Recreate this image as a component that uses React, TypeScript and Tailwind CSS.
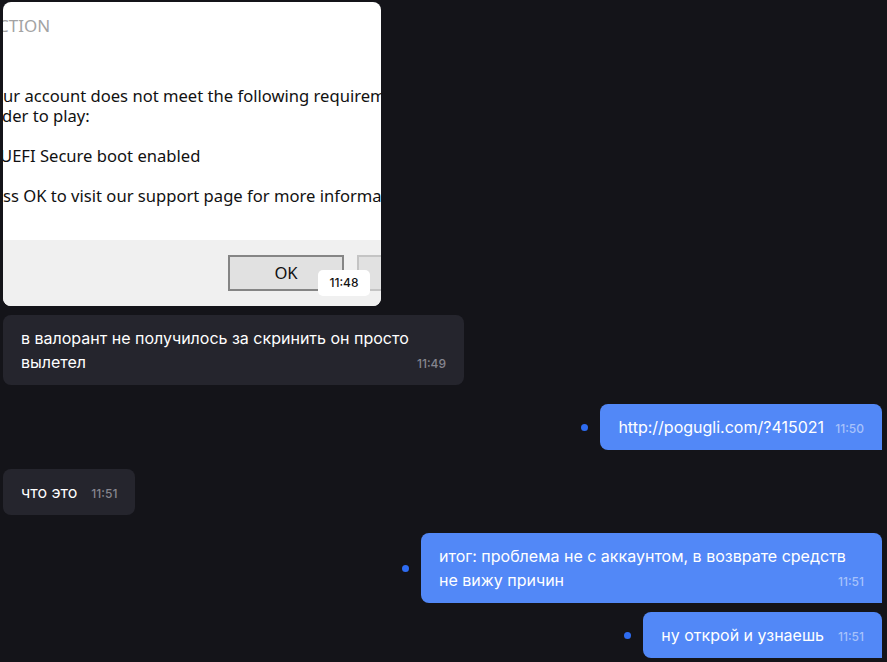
import React from "react";

const SANS = { fontFamily: "Inter, 'Noto Sans', sans-serif" };

function Time({ t, out }: { t: string; out?: boolean }) {
  return (
    <span
      className={
        "absolute bottom-[13px] right-[18px] text-[12px] leading-4 font-medium " +
        (out ? "text-[#a7c2fb]" : "text-[#85858f]")
      }
    >
      {t}
    </span>
  );
}

function Bubble({ text, time, out }: { text: string; time: string; out?: boolean }) {
  return (
    <div
      className={
        "relative max-w-[461px] rounded-[8px] pl-[18px] pr-[18px] pt-[11px] pb-[11px] text-[16px] leading-6 text-white " +
        (out ? "bg-[#5288f7] rounded-br-none" : "bg-[#25252d]")
      }
    >
      {text}
      <span className="inline-block w-[40px]" />
      <Time t={time} out={out} />
    </div>
  );
}

function OutRow({ text, time }: { text: string; time: string }) {
  return (
    <div className="flex items-center justify-end gap-[12px] pr-[5px]">
      <span className="h-[7px] w-[7px] rounded-full bg-[#2e6cf1]" />
      <Bubble text={text} time={time} out />
    </div>
  );
}

function Dialog() {
  const f = { fontFamily: "'Noto Sans', 'Open Sans', sans-serif" };
  return (
    <div className="relative h-[304px] w-[378px] overflow-hidden rounded-[8px] bg-white" style={f}>
      <div className="flex h-[238px] flex-col whitespace-nowrap">
        <div className="ml-[-5px] mt-[12px] text-[17px] leading-6 text-[#a3a3a3]">CTION</div>
        <div className="ml-[0px] mt-[48px] text-[16.6px] leading-[20px] text-[#111]">
          ur account does not meet the following requirements in
        </div>
        <div className="ml-[-1px] text-[16.6px] leading-[20px] text-[#111]">der to play:</div>
        <div className="ml-[-3px] mt-[20px] text-[16.6px] leading-[20px] text-[#111]">UEFI Secure boot enabled</div>
        <div className="ml-[0px] mt-[20px] text-[16.6px] leading-[20px] text-[#111]">
          ss OK to visit our support page for more information.
        </div>
      </div>
      <div className="relative h-[66px] bg-[#f0f0f0]">
        <div className="absolute left-[225px] top-[15px] flex h-[36px] w-[116px] items-center justify-center border-2 border-[#858585] bg-[#e1e1e1] text-[16.6px] text-[#111]">
          OK
        </div>
        <div className="absolute left-[354px] top-[15px] h-[36px] w-[60px] border-2 border-[#c4c4c4] bg-[#e1e1e1]" />
      </div>
      <div
        className="absolute left-[315px] top-[268px] flex h-[26px] w-[52px] items-center justify-center rounded-[5px] bg-white text-[12px] font-medium text-[#111]"
        style={SANS}
      >
        11:48
      </div>
    </div>
  );
}

export default function App() {
  return (
    <div className="h-[662px] w-[887px] overflow-hidden bg-[#141419]" style={SANS}>
      <div className="flex flex-col pt-[2px]">
        <div className="pl-[3px]">
          <Dialog />
        </div>
        <div className="mt-[9px] flex pl-[3px]">
          <Bubble text="в валорант не получилось за скринить он просто вылетел" time="11:49" />
        </div>
        <div className="mt-[19px]">
          <OutRow text="http://pogugli.com/?415021" time="11:50" />
        </div>
        <div className="mt-[19px] flex pl-[3px]">
          <Bubble text="что это" time="11:51" />
        </div>
        <div className="mt-[18px]">
          <OutRow text="итог: проблема не с аккаунтом, в возврате средств не вижу причин" time="11:51" />
        </div>
        <div className="mt-[9px]">
          <OutRow text="ну открой и узнаешь" time="11:51" />
        </div>
      </div>
    </div>
  );
}
